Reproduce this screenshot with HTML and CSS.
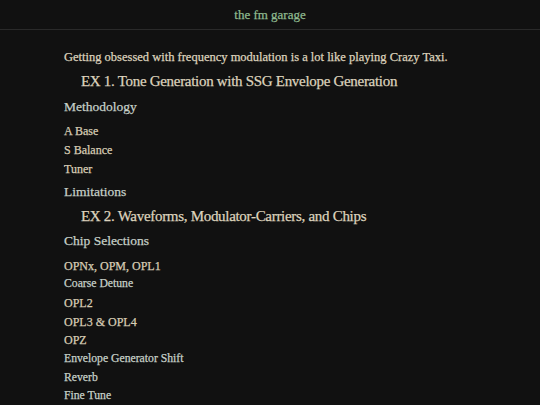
FILE: index.html
```html
<!DOCTYPE html>
<html>
<head>
<meta charset="utf-8">
<link rel="stylesheet" href="styles.css">
</head>
<body>
<header class="top"><span class="brand">the fm garage</span></header>
<main class="content">
  <p class="intro">Getting obsessed with frequency modulation is a lot like playing Crazy Taxi.</p>
  <h2 class="ex">EX 1. Tone Generation with SSG Envelope Generation</h2>
  <h3 class="sec">Methodology</h3>
  <h4 class="item">A Base</h4>
  <h4 class="item">S Balance</h4>
  <h4 class="item">Tuner</h4>
  <h3 class="sec">Limitations</h3>
  <h2 class="ex">EX 2. Waveforms, Modulator-Carriers, and Chips</h2>
  <h3 class="sec">Chip Selections</h3>
  <h4 class="item">OPNx, OPM, OPL1</h4>
  <h5 class="sub">Coarse Detune</h5>
  <h4 class="item">OPL2</h4>
  <h4 class="item">OPL3 &amp; OPL4</h4>
  <h4 class="item">OPZ</h4>
  <h5 class="sub">Envelope Generator Shift</h5>
  <h5 class="sub">Reverb</h5>
  <h5 class="sub">Fine Tune</h5>
</main>
</body>
</html>
```
FILE: styles.css
```css
html, body {
  margin: 0;
  padding: 0;
  background: #111111;
  height: 100%;
  overflow: hidden;
}
body {
  font-family: "Liberation Serif", "DejaVu Serif", serif;
  -webkit-text-stroke: 0.25px currentColor;
}
.top {
  height: 29px;
  border-bottom: 1px solid #2a2a2a;
  display: flex;
  align-items: center;
  justify-content: center;
}
.brand {
  color: #8fba8f;
  font-size: 13px;
}
.content {
  padding: 16px 0 0 64px;
  display: flex;
  flex-direction: column;
}
.content > * {
  margin: 0;
  font-weight: normal;
}
.intro {
  color: #ddd3bd;
  font-size: 12.5px;
  line-height: 23px;
}
.ex {
  color: #ddd3bd;
  font-size: 15px;
  letter-spacing: -0.3px;
  line-height: 24px;
  padding-left: 17px;
}
.sec + .ex {
  margin-top: -0.5px;
}
.ex + .sec {
  margin-top: 1.75px;
}
.sec {
  color: #c6d0c8;
  font-size: 13.5px;
  line-height: 24px;
}
.item + .sec {
  margin-top: 1.75px;
}
.sec + .item {
  margin-top: 3.25px;
}
.item {
  color: #d8cdb5;
  font-size: 12px;
  line-height: 18.75px;
}
.sub {
  color: #c6d0c8;
  font-size: 11.7px;
  line-height: 18.5px;
}
```
